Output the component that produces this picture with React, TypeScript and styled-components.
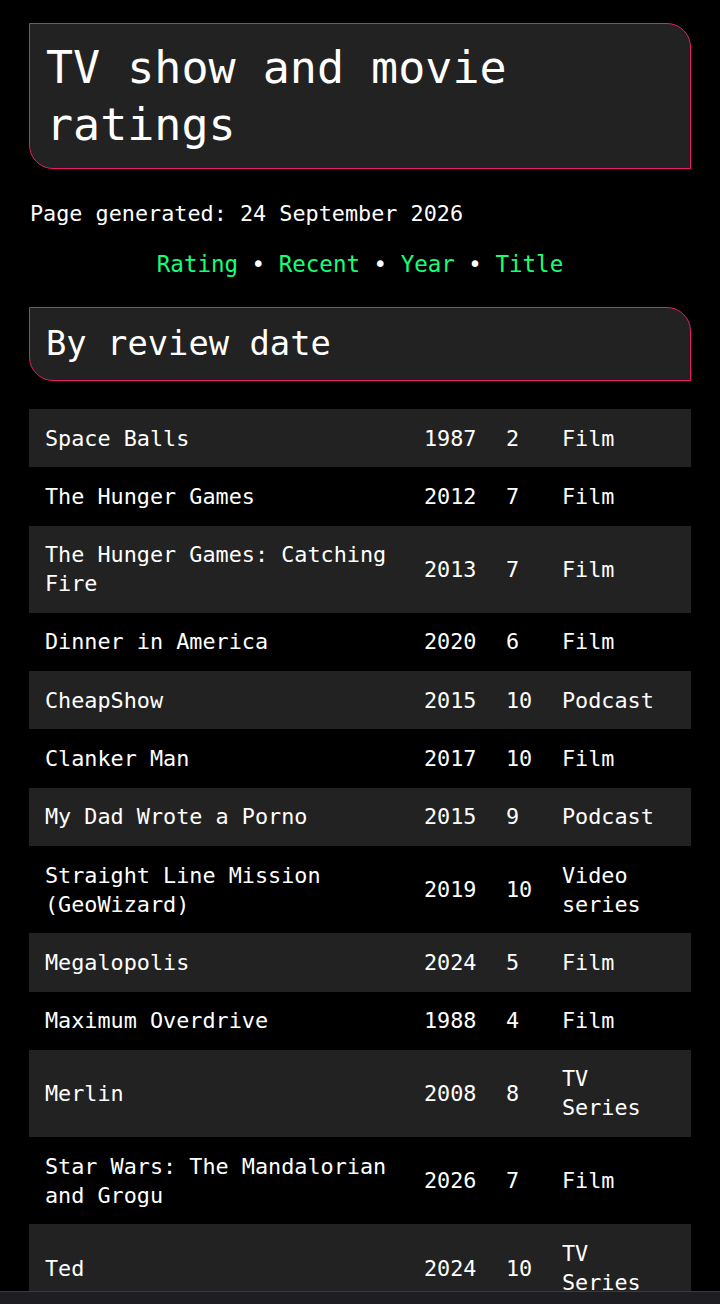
import React from "react";
import styled, { createGlobalStyle } from "styled-components";

const GlobalStyle = createGlobalStyle`
  html, body {
    margin: 0;
    padding: 0;
    background: #000;
  }
  body {
    color: #fff;
    font-family: "DejaVu Sans Mono", "Liberation Mono", monospace;
    font-size: 21.8px;
    line-height: 29px;
  }
`;

const Page = styled.main`
  padding: 23px 29px 40px 29px;
  display: flex;
  flex-direction: column;
`;

const HeaderBox = styled.header`
  background: #222;
  border: 1px solid #f0186e;
  border-radius: 0 24px 0 24px;
  padding: 15px 15px 15px 16px;
`;

const Title = styled.h1`
  margin: 0;
  font-size: 45px;
  line-height: 57px;
  font-weight: normal;
`;

const SectionTitle = styled.h2`
  margin: 0;
  font-size: 33.8px;
  line-height: 42px;
  font-weight: normal;
`;

const Generated = styled.p`
  margin: 30px 0 0 1px;
`;

const Nav = styled.nav`
  margin: 22px 0 28px;
  text-align: center;
  font-size: 22.5px;
`;

const NavLink = styled.a`
  color: #14ff78;
  text-decoration: none;
`;

const Sep = styled.span`
  color: #fff;
`;

const Table = styled.table`
  margin-top: 28px;
  width: 100%;
  border-collapse: collapse;
  table-layout: fixed;
`;

const Row = styled.tr`
  &:nth-child(odd) {
    background: #222;
  }
`;

const Cell = styled.td`
  padding: 14.65px 15px 14.65px 16px;
  line-height: 29px;
  vertical-align: middle;
  text-align: left;
`;

const BottomBar = styled.div`
  position: fixed;
  left: 0;
  right: 0;
  bottom: 0;
  height: 12px;
  background: #1e1d22;
  border-top: 1px solid #3a3940;
`;

const rows: [string, number, number, string][] = [
  ["Space Balls", 1987, 2, "Film"],
  ["The Hunger Games", 2012, 7, "Film"],
  ["The Hunger Games: Catching Fire", 2013, 7, "Film"],
  ["Dinner in America", 2020, 6, "Film"],
  ["CheapShow", 2015, 10, "Podcast"],
  ["Clanker Man", 2017, 10, "Film"],
  ["My Dad Wrote a Porno", 2015, 9, "Podcast"],
  ["Straight Line Mission (GeoWizard)", 2019, 10, "Video series"],
  ["Megalopolis", 2024, 5, "Film"],
  ["Maximum Overdrive", 1988, 4, "Film"],
  ["Merlin", 2008, 8, "TV Series"],
  ["Star Wars: The Mandalorian and Grogu", 2026, 7, "Film"],
  ["Ted", 2024, 10, "TV Series"],
];

export default function App() {
  return (
    <>
      <GlobalStyle />
      <Page>
        <HeaderBox>
          <Title>TV show and movie ratings</Title>
        </HeaderBox>
        <Generated>Page generated: 24 September 2026</Generated>
        <Nav>
          <NavLink href="#">Rating</NavLink>
          <Sep> • </Sep>
          <NavLink href="#">Recent</NavLink>
          <Sep> • </Sep>
          <NavLink href="#">Year</NavLink>
          <Sep> • </Sep>
          <NavLink href="#">Title</NavLink>
        </Nav>
        <HeaderBox>
          <SectionTitle>By review date</SectionTitle>
        </HeaderBox>
        <Table>
          <colgroup>
            <col style={{ width: 379 }} />
            <col style={{ width: 82 }} />
            <col style={{ width: 56 }} />
            <col />
          </colgroup>
          <tbody>
            {rows.map(([t, y, r, k]) => (
              <Row key={t}>
                <Cell>{t}</Cell>
                <Cell>{y}</Cell>
                <Cell>{r}</Cell>
                <Cell>{k}</Cell>
              </Row>
            ))}
          </tbody>
        </Table>
      </Page>
      <BottomBar />
    </>
  );
}
